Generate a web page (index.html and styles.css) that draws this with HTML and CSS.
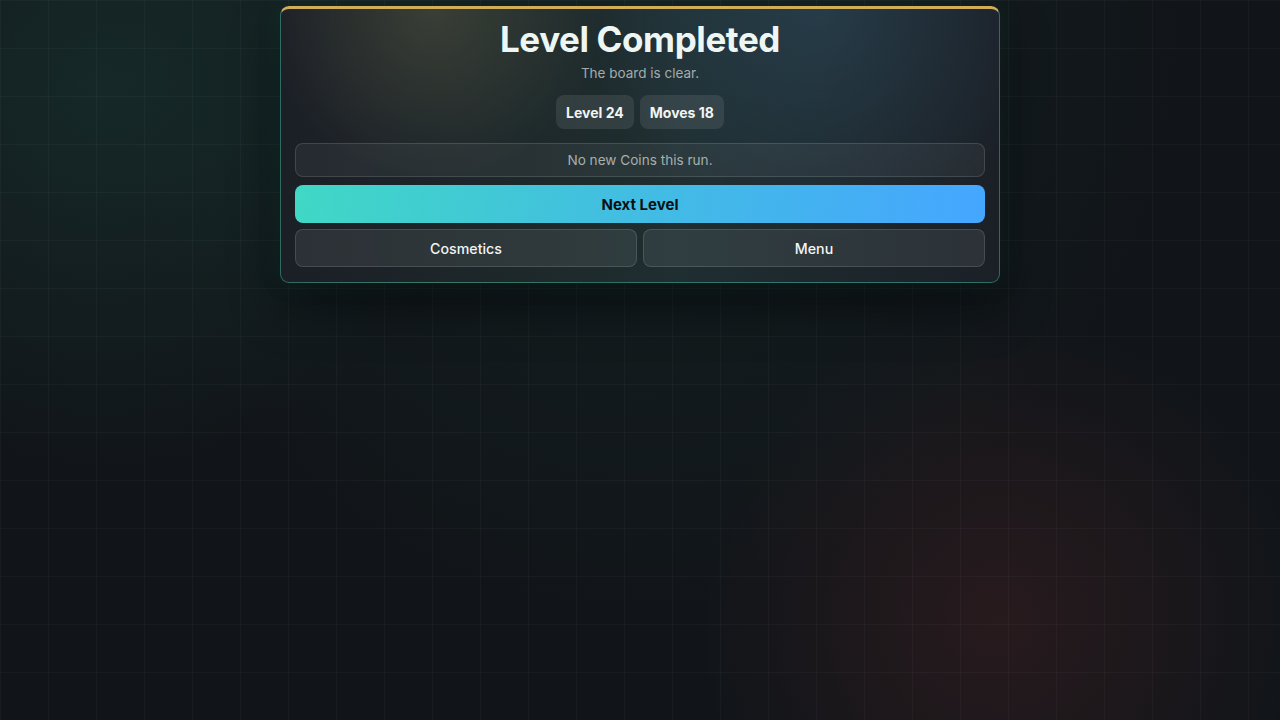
FILE: index.html
```html
<!DOCTYPE html>
<html lang="en">
<head>
<meta charset="utf-8">
<title>Level Completed</title>
<link rel="stylesheet" href="styles.css">
</head>
<body>
<div class="page">
  <section class="card">
    <h1 class="title">Level Completed</h1>
    <p class="subtitle">The board is clear.</p>
    <div class="pills">
      <span class="pill">Level 24</span>
      <span class="pill">Moves 18</span>
    </div>
    <div class="notice">No new Coins this run.</div>
    <button class="btn-primary">Next Level</button>
    <div class="row">
      <button class="btn-secondary">Cosmetics</button>
      <button class="btn-secondary">Menu</button>
    </div>
  </section>
</div>
</body>
</html>
```

FILE: styles.css
```css
* { box-sizing: border-box; }
html, body { margin: 0; padding: 0; height: 100%; }
body {
  font-family: Inter, "Noto Sans", "Liberation Sans", sans-serif;
  color: #eef5f2;
  background-color: #111519;
  background-image:
    linear-gradient(rgba(255,255,255,0.03) 1px, transparent 1px),
    linear-gradient(90deg, rgba(255,255,255,0.03) 1px, transparent 1px),
    radial-gradient(circle at 78% 86%, rgba(120,45,45,0.22) 0, rgba(120,45,45,0) 300px),
    radial-gradient(circle at 8% 12%, rgba(40,110,95,0.22) 0, rgba(40,110,95,0) 380px),
    radial-gradient(ellipse at 50% 0%, rgba(30,70,60,0.25) 0, rgba(30,70,60,0) 60%);
  background-size: 48px 48px, 48px 48px, 100% 100%, 100% 100%, 100% 100%;
  overflow: hidden;
}
.page {
  display: flex;
  justify-content: center;
  padding-top: 6px;
}
.card {
  position: relative;
  width: 720px;
  border: 1px solid rgba(60,170,150,0.55);
  border-top: 3px solid #d2ad58;
  border-radius: 9px;
  padding: 10px 14px 15px;
  display: flex;
  flex-direction: column;
  align-items: stretch;
  background-color: #1a1f25;
  background-image:
    radial-gradient(circle at 21% 0%, rgba(190,180,110,0.18) 0, rgba(190,180,110,0) 170px),
    radial-gradient(circle at 75% 0%, rgba(70,130,170,0.22) 0, rgba(70,130,170,0) 230px),
    linear-gradient(90deg, #1b1f26 0%, #1e2a2c 40%, #1f2e31 55%, #1b2027 100%);
  box-shadow: 0 0 26px rgba(50,160,130,0.10), 0 24px 50px rgba(0,0,0,0.45);
}
.title {
  margin: 0;
  text-align: center;
  font-size: 35px;
  line-height: 40px;
  font-weight: 700;
  letter-spacing: -0.4px;
  color: #eef6f3;
}
.subtitle {
  margin: 5px 0 0;
  text-align: center;
  font-size: 13.5px;
  line-height: 18px;
  color: #a3acab;
}
.pills {
  display: flex;
  justify-content: center;
  gap: 6px;
  margin-top: 13px;
}
.pill {
  display: inline-flex;
  align-items: center;
  height: 34px;
  padding: 0 10px;
  border-radius: 8px;
  background: rgba(255,255,255,0.09);
  font-size: 14px;
  font-weight: 700;
  color: #f1f5f4;
}
.notice {
  margin-top: 14px;
  height: 34px;
  display: flex;
  align-items: center;
  justify-content: center;
  border: 1px solid rgba(255,255,255,0.13);
  border-radius: 8px;
  background: rgba(255,255,255,0.05);
  font-size: 13.6px;
  color: #a7afae;
}
.btn-primary {
  margin-top: 8px;
  height: 38px;
  border: 0;
  border-radius: 8px;
  background: linear-gradient(100deg, #40d8c5 0%, #42bfe0 45%, #45a6ff 100%);
  font-family: inherit;
  font-size: 15px;
  font-weight: 700;
  color: #0a1114;
}
.row {
  margin-top: 6px;
  display: grid;
  grid-template-columns: 1fr 1fr;
  gap: 6px;
}
.btn-secondary {
  height: 38px;
  border: 1px solid rgba(255,255,255,0.13);
  border-radius: 8px;
  background: rgba(255,255,255,0.08);
  font-family: inherit;
  font-size: 14.2px;
  font-weight: 450;
  color: #f2f5f5;
}
```
